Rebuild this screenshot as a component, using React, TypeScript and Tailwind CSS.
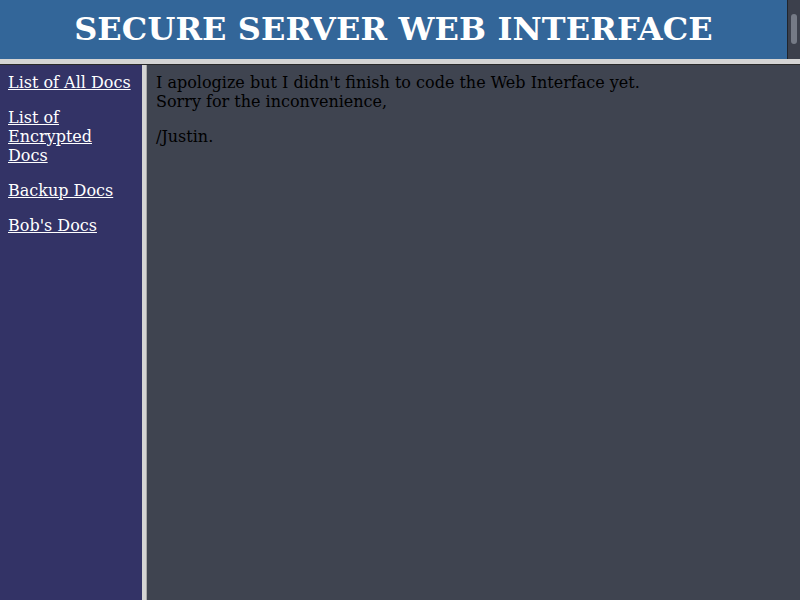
import React from 'react';

const serif = { fontFamily: '"DejaVu Serif", "Liberation Serif", serif' };

export default function App() {
  return (
    <div className="h-screen w-full flex flex-col bg-[#d4d4d4] overflow-hidden" style={serif}>
      {/* top frame */}
      <div className="h-[59px] flex shrink-0">
        <div className="flex-1 bg-[#336699] flex items-center justify-center">
          <h1 className="text-[32px] font-bold text-white leading-[37px] tracking-[0.1px]">
            SECURE SERVER WEB INTERFACE
          </h1>
        </div>
        <div className="w-[13px] bg-[#3c404c] border-l border-[#20242c] flex justify-center pt-[14px]">
          <div className="w-[6px] h-[30px] rounded-full bg-[#757a86]" />
        </div>
      </div>

      {/* lower frames */}
      <div className="flex-1 flex mt-[5px] border-t border-[#2a2a2a] min-h-0">
        <div className="w-[142px] shrink-0 bg-[#333366] px-2 pt-2 flex flex-col gap-4 text-[16px] leading-[19px]">
          <a href="#" className="text-white underline">List of All Docs</a>
          <a href="#" className="text-white underline">List of Encrypted Docs</a>
          <a href="#" className="text-white underline">Backup Docs</a>
          <a href="#" className="text-white underline">Bob's Docs</a>
        </div>
        <div className="w-[5px] shrink-0 bg-[#d4d4d4] border-r border-[#a8a8a8]" />
        <div className="flex-1 bg-[#3f4450] pl-[9px] pr-2 pt-2 text-black text-[16px] leading-[19px]">
          <p>
            I apologize but I didn't finish to code the Web Interface yet.
            <br />
            Sorry for the inconvenience,
          </p>
          <p className="mt-4">/Justin.</p>
        </div>
      </div>
    </div>
  );
}
